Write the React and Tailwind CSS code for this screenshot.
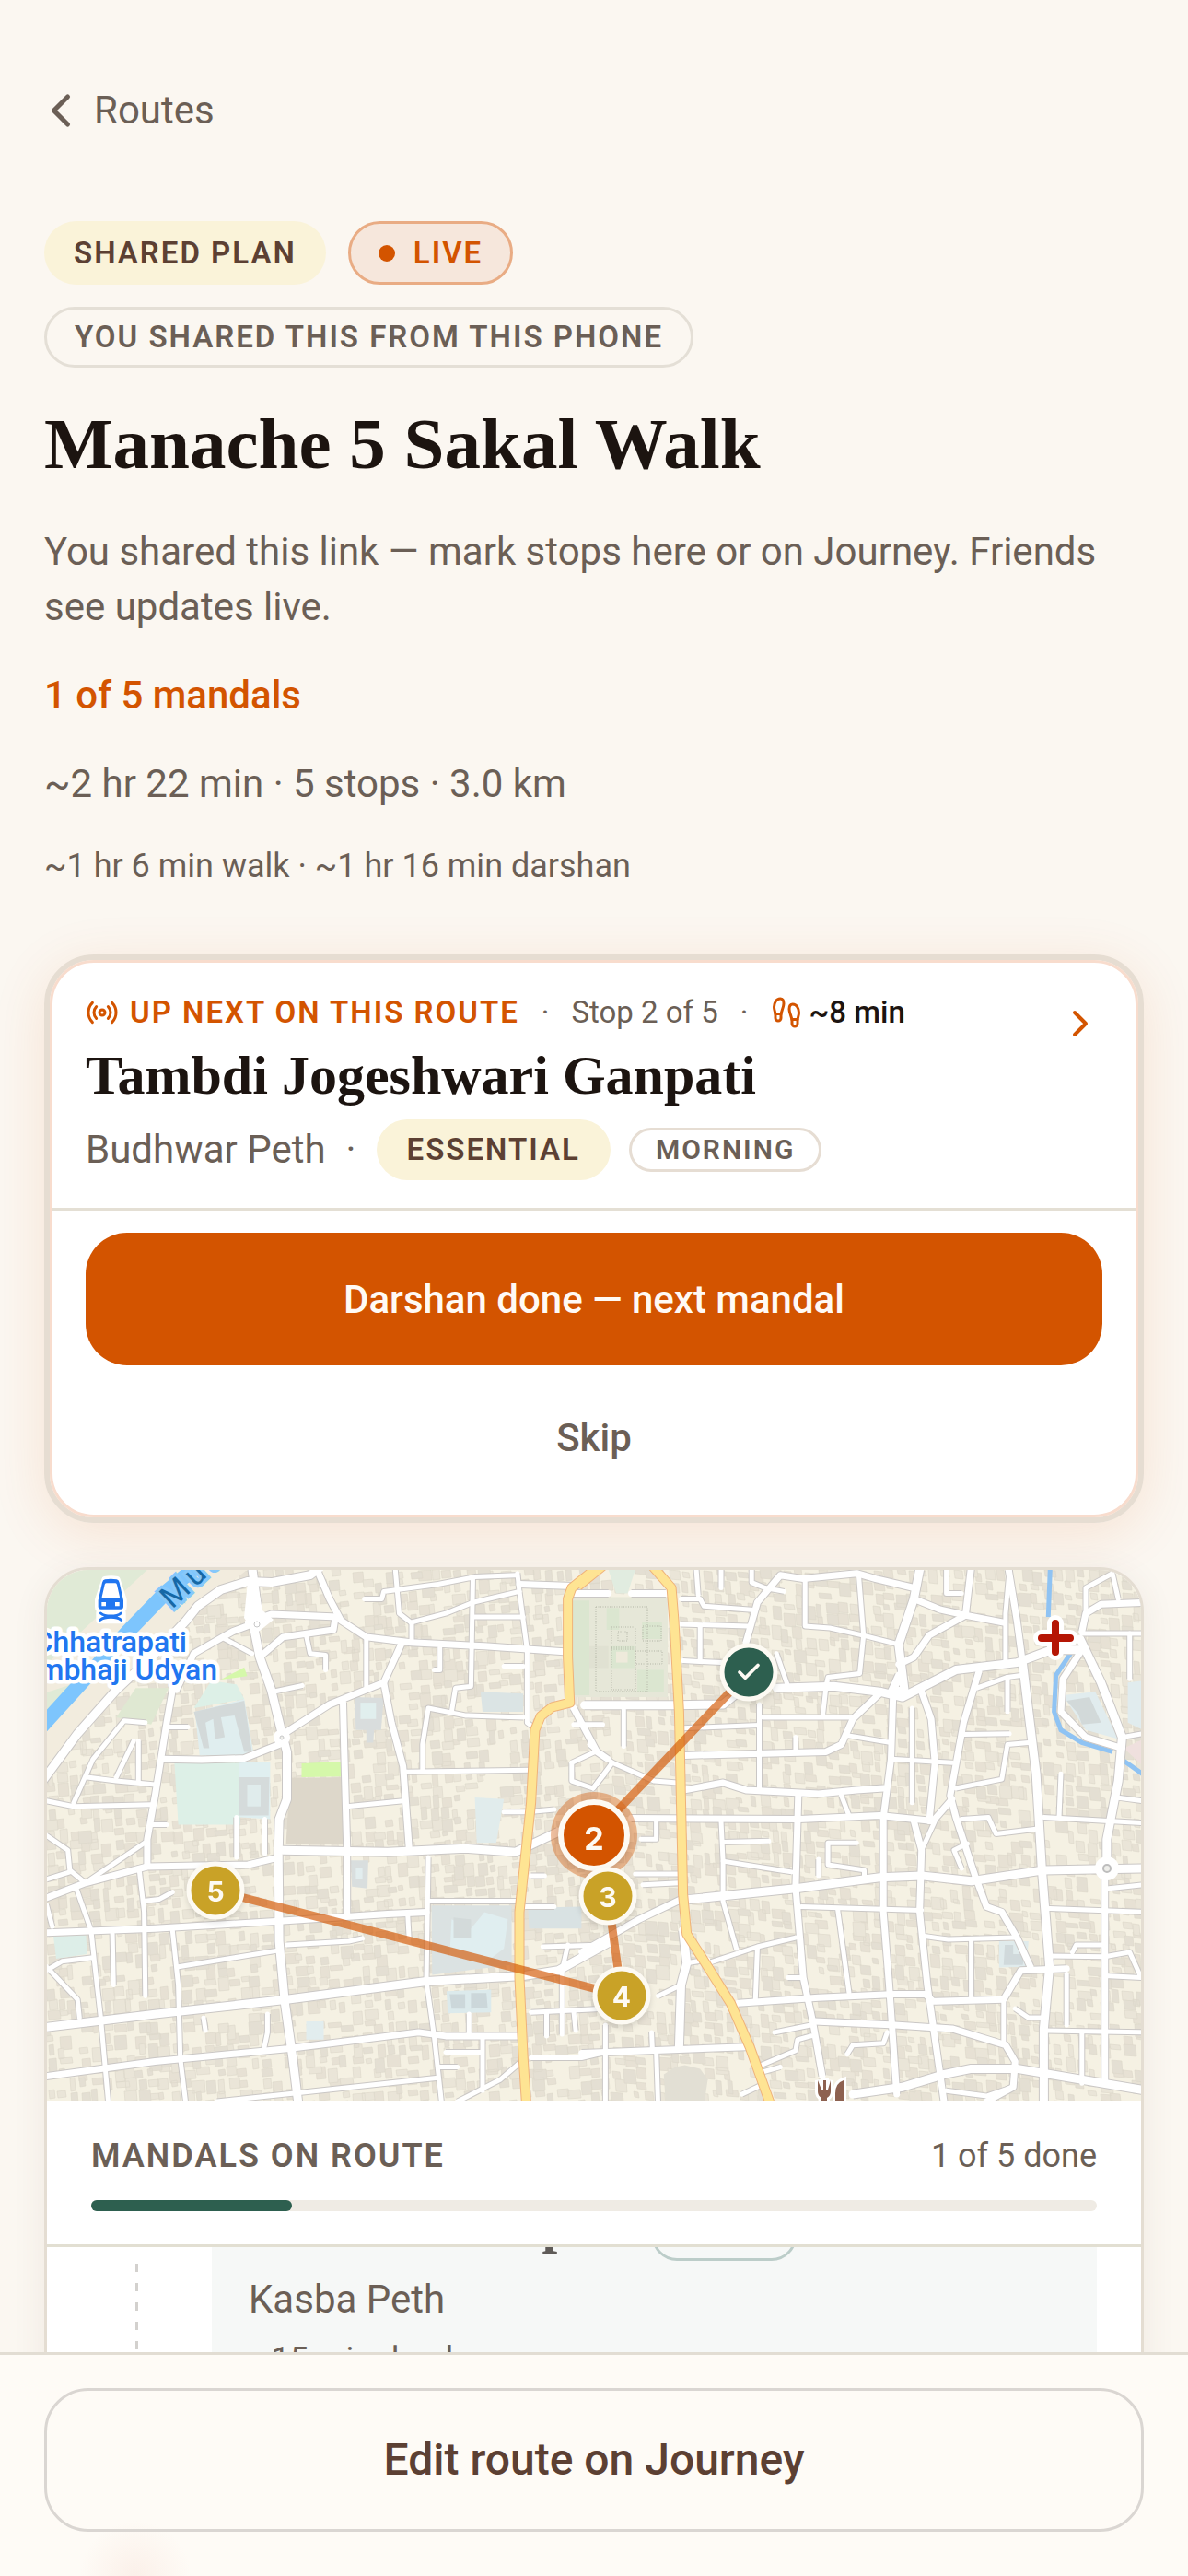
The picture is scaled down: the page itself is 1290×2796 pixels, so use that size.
import { Check, ChevronLeft, ChevronRight, Footprints, Radio } from 'lucide-react';

const PAGE_FONT = "font-['Roboto','Noto_Sans',sans-serif]";
const SERIF_FONT = "font-['Liberation_Serif',serif]";

/**
 * Map geometry
 * The street data is split in two sheets, each with its own origin and scale
 */
const SHEETS = {
  west: { x: -50, y: -24, sx: 2.3758, sy: 2.529 },
  east: { x: 590, y: -24, sx: 2.412, sy: 2.529 },
};

// 'x,y x,y ...' in sheet units -> svg path in map units
const toPath = (sheet, line, close = false) => {
  const s = SHEETS[sheet];
  const points = line.split(' ').map((pair) => {
    const [x, y] = pair.split(',').map(Number);
    return `${Math.round((x / s.sx + s.x) * 10) / 10} ${Math.round((y / s.sy + s.y) * 10) / 10}`;
  });
  return `M${points.join('L')}${close ? 'Z' : ''}`;
};

const ROADS = [
  {
    sheet: 'west',
    width: 9,
    lines: [
      '110,640 200,510 300,390 400,290 480,200 510,160 570,115 640,92 700,95 800,75 825,55',
      '650,50 662,150 655,220 670,300 700,390 725,500 740,560 740,690 720,745 718,840 720,1080 735,1250 755,1400 770,1530',
      '730,830 1000,835 1200,825 1330,835 1400,800 1440,780',
      '110,1317 400,1280 740,1240 1100,1190 1350,1175 1440,1160 1568,1085',
    ],
  },
  {
    sheet: 'west',
    width: 7,
    lines: [
      '640,205 700,182 870,190',
      '455,390 500,290 600,230 650,210',
      '820,65 850,140 880,200 945,245 1060,260 1250,270 1455,285',
      '740,505 850,430 990,370 1035,265',
      '990,370 1010,480 1040,600 1055,820',
      '718,850 640,870 380,875 220,920 110,965',
      '445,390 430,480 415,580 400,680 380,800 380,870',
      '110,1057 400,1045 720,1025 1000,1005 1100,1000',
      '110,1452 400,1410 740,1375 1080,1330 1150,1340 1345,1340',
      '420,580 520,582 630,578 720,540',
      '885,425 888,560 895,820 895,1010',
      '670,300 730,245 860,225 865,190',
      '1340,100 1480,105',
      '1480,440 1540,560 1568,580',
    ],
  },
  {
    sheet: 'west',
    width: 5,
    lines: [
      '580,250 650,290',
      '1020,60 1030,180 1060,205 1150,180 1220,150 1340,120',
      '1062,205 1062,260',
      '945,245 945,380',
      '1040,615 1365,610',
      '1090,610 1090,540 1105,440 1200,460 1350,465',
      '1165,450 1175,385 1215,380 1220,80',
      '1225,190 1350,190',
      '1335,70 1340,120 1360,280 1360,480 1385,500',
      '895,710 1040,695',
      '120,695 190,710 390,705',
      '190,700 240,580 320,475 375,480',
      '225,630 300,640 400,650',
      '300,630 345,530',
      '357,530 357,640',
      '430,492 485,492',
      '120,790 175,830 180,885 220,920 380,805',
      '120,910 180,890',
      '195,930 235,1050 245,1150 260,1290 280,1530',
      '360,890 372,1000 375,1230',
      '445,1050 460,1200 465,1400 480,1530',
      '460,1150 720,1105',
      '740,1090 900,1080 935,1072',
      '560,1520 760,1497 1130,1455',
      '1105,850 1100,1190 1120,1340 1140,1530',
      '1105,970 1335,970',
      '1052,1010 1055,1070',
      '1245,1345 1245,1490',
      '1180,1520 1290,1460 1345,1410',
      '1370,1400 1500,1400 1560,1385',
      '1210,1280 1210,1340',
      '290,1060 293,1200',
      '120,1150 200,1240 205,1290',
      '120,1160 160,1135 240,1125',
      '525,1290 530,1325',
      '690,1280 690,1330 680,1380',
      '610,740 610,850',
      '683,745 683,840',
      '370,970 410,965 445,945',
      '120,980 135,1040',
      '395,760 430,760',
      '1300,725 1360,725 1430,718',
      '1370,900 1405,900',
      '1400,1095 1560,1090',
      '1465,1090 1450,1160 1450,1335',
      '1370,1275 1560,1265',
      '1355,985 1430,985',
      '1410,1280 1410,1340',
      '1480,1270 1485,1325',
      '1475,590 1475,640 1530,660 1560,620',
      '1475,590 1535,560',
      '705,395 780,378',
      '790,240 800,290 840,295 840,335',
      '1300,325 1350,325',
      '1135,275 1135,335 1120,335',
      '940,140 985,140 990,120 1130,100 1225,80 1330,75',
      '1480,485 1555,485',
      '1150,1385 1240,1385',
      '1130,1425 1180,1425',
    ],
  },
  {
    sheet: 'east',
    width: 9,
    lines: [
      '490,385 640,380 760,395 820,410 960,335 1120,315 1210,280 1290,280',
      '1135,320 1150,450 1170,620 1185,880 1205,1150 1190,1320 1190,1530',
      '1285,250 1340,370 1395,520 1385,640 1355,800 1355,880',
      '260,965 540,935 760,905 870,900 1000,915 1190,885 1460,880',
      '865,60 850,140 810,265 825,390 790,400 812,350',
      '-13,432 230,432 350,430 385,400',
      '690,1500 820,1480 930,1445 1000,1430 1120,1430 1460,1490',
      '245,1050 255,1140 240,1200 235,1370',
    ],
  },
  {
    sheet: 'east',
    width: 7,
    lines: [
      '-50,125 50,125',
      '110,125 200,125',
      '410,260 440,150 500,75 560,85 700,70 750,85 850,110',
      '810,320 850,300 890,240 985,185 1000,50',
      '850,140 920,170 985,185 1085,205',
      '1290,230 1300,180 1340,155 1460,150',
      '1290,280 1240,360 1235,450 1300,520 1395,550',
      '795,415 790,580 770,740 770,1000 785,1200 805,1500',
      '870,395 895,470 905,590 890,750',
      '1020,340 980,480 945,680 960,740 1010,900 1040,985 1080,1000 1120,1070 1155,1150',
      '110,742 550,745 760,735 900,750 950,690',
      '250,665 350,645 410,665 600,675 700,665 770,660',
      '547,680 540,930 560,1180 585,1300 610,1450',
      '850,750 870,830 865,1000 885,1200 930,1530',
      '390,1250 600,1235 800,1225 880,1225 900,1245 1085,1240 1130,1160 1250,1155',
      '590,1300 800,1310 950,1320 1090,1365 1115,1410 1110,1480 1040,1520',
      '-20,1110 130,1020 240,965',
      '-20,1387 410,1370',
      '1098,60 1120,200 1135,320',
      '1350,900 1350,1470',
      '250,570 620,560 660,540 690,470 760,400',
    ],
  },
  {
    sheet: 'east',
    width: 5,
    lines: [
      '240,140 290,140 300,160 425,170',
      '240,210 415,215',
      '245,310 345,315',
      '290,215 290,310',
      '425,60 425,95 460,110 510,120',
      '565,85 565,215 630,220 715,240 810,265',
      '705,70 718,240 708,345 625,355 620,380 612,455',
      '935,60 935,125 975,125',
      '1100,60 1090,180 1090,310',
      '490,290 520,380',
      '280,60 285,130',
      '345,60 345,110',
      '1300,180 1300,110 1370,70 1385,140',
      '1290,235 1450,235',
      '1415,235 1415,360',
      '1395,520 1450,510',
      '1380,685 1450,695',
      '1235,620 1230,740',
      '1190,740 1360,750 1450,755',
      '455,465 690,465',
      '245,495 445,487',
      '445,430 445,660',
      '675,515 790,535',
      '540,520 540,560',
      '845,440 845,700',
      '790,580 950,590',
      '980,512 1100,510',
      '1150,535 1095,540 1080,635 960,660',
      '1015,385 1095,355 1130,350',
      '1095,355 1095,450',
      '660,680 680,735',
      '345,750 350,860 350,970 385,1100',
      '350,860 530,890',
      '350,808 470,805',
      '700,810 625,810 625,870 720,885 720,900',
      '600,855 600,900',
      '870,830 905,750',
      '975,745 1045,740 1065,785 1170,772',
      '990,812 955,830 975,880',
      '555,985 870,995',
      '650,990 680,1220',
      '310,1140 440,1095 540,1070',
      '440,1100 435,1240',
      '870,1065 940,1075 1115,1070',
      '1000,1075 1000,1235',
      '1085,1240 1085,1360',
      '485,1330 580,1310',
      '450,1420 540,1380 545,1350 580,1340',
      '675,1390 690,1365 770,1360 780,1330',
      '520,1180 560,1180',
      '1205,990 1450,1000',
      '1205,1120 1350,1122 1415,1110 1445,1180 1350,1175',
      '1265,1110 1275,1090 1350,1090',
      '1250,1170 1250,1310',
      '1195,1325 1450,1330',
      '1290,1330 1290,1470',
      '1115,1265 1150,1290 1190,1290',
      '1360,935 1450,925',
      '180,1230 240,1200',
      '42,1310 42,1530',
      '175,1380 180,1530',
      '163,1330 165,1380',
      '255,1140 310,1130',
      '90,445 90,545',
      '0,540 60,590 170,640 230,645',
      '60,590 10,660',
      '135,800 175,800 175,750',
      '120,895 235,895',
      '140,925 235,920',
      '400,1500 450,1475',
      '450,1440 500,1425',
      '935,1490 1040,1505 1110,1480',
    ],
  },
];

const HIGHWAYS = [
  toPath('west', '1545,50 1475,110 1465,140 1465,300 1470,425 1425,437 1395,462 1380,500 1370,700 1355,850 1340,1000 1340,1180 1350,1400 1358,1530'),
  toPath('east', '-30,105 35,50'),
  toPath('east', '165,50 215,110 222,200 235,450 240,700 245,950 255,1060 310,1150 370,1250 420,1370 475,1530'),
];

const AREAS = [
  ['west', '#f2ecde', '110,50 650,50 480,190 300,390 110,630'],
  ['west', '#e0ead6', '110,50 390,50 270,170 110,330'],
  ['west', '#e0ead6', '110,400 200,370 110,460'],
  ['west', '#dfe8d2', '350,385 435,385 390,485 300,465'],
  ['west', '#ddf0e7', '450,590 620,590 620,760 460,760'],
  ['west', '#e0eff0', '615,588 697,588 697,745 620,740'],
  ['west', '#d5dbdb', '615,630 695,630 693,735 617,735'],
  ['west', '#e0ecec', '638,650 672,650 672,710 638,710'],
  ['west', '#ddf0e7', '500,440 545,365 610,375 630,415'],
  ['west', '#e0eeef', '503,450 630,415 655,570 515,570'],
  ['west', '#d3d9d9', '500,450 630,420 650,560 630,560 605,460 570,465 580,520 555,525 550,470 530,480 540,550 525,550'],
  ['west', '#d5f8aa', '570,362 630,328 638,352'],
  ['west', '#d5f8aa', '778,592 880,587 880,628 778,630'],
  ['west', '#ddd7ca', '748,632 885,630 885,815 738,812'],
  ['west', '#d9dddd', '915,410 990,412 983,500 965,500 963,535 945,535 945,500 918,500'],
  ['west', '#e1efee', '930,425 970,425 970,470 930,470'],
  ['west', '#dbe2e2', '1113,982 1320,982 1320,1145 1115,1172'],
  ['west', '#e0eef0', '1165,1020 1215,1045 1250,1000 1310,1020 1300,1100 1250,1140 1160,1120'],
  ['west', '#d3dada', '1170,1015 1215,1020 1215,1070 1170,1070'],
  ['west', '#ddeee8', '138,1067 222,1063 225,1115 145,1128'],
  ['west', '#e1ecec', '1225,685 1300,690 1280,810 1230,810'],
  ['west', '#dceaec', '1152,1217 1267,1213 1267,1275 1155,1278'],
  ['west', '#ccd7da', '1160,1225 1200,1225 1200,1265 1165,1265'],
  ['west', '#ccd7da', '1215,1222 1255,1222 1258,1262 1215,1265'],
  ['west', '#d9e2e3', '1362,988 1500,985 1500,1045 1365,1045'],
  ['west', '#dbe4e4', '1240,395 1350,400 1350,450 1245,450'],
  ['west', '#e2edee', '790,1300 835,1300 835,1350 790,1350'],
  ['west', '#d9dede', '905,858 950,858 948,935 908,930'],
  ['west', '#e2edee', '918,880 935,880 935,910 918,910'],
  ['east', '#e6e7d8', '-60,135 205,135 205,410 -60,410'],
  ['east', '#dbe6d0', '-45,145 0,145 0,405 -45,405'],
  ['east', '#dbe6d0', '45,165 78,165 78,225 45,225'],
  ['east', '#dbe6d0', '138,205 190,205 190,250 138,250'],
  ['east', '#e0e1d2', '0,270 50,270 50,330 0,330'],
  ['east', '#dbe6d0', '55,270 118,270 118,330 55,330'],
  ['east', '#eeeadb', '70,285 100,285 100,315 70,315'],
  ['east', '#dbe6d0', '125,335 195,335 195,395 125,395'],
  ['east', '#e1ece0', '50,60 120,60 100,125 70,125'],
  ['east', '#e1ecee', '1240,405 1325,395 1385,525 1300,500'],
  ['east', '#d2d9d9', '1250,420 1310,410 1340,480 1290,485 1280,455'],
  ['east', '#e1ecee', '1410,370 1450,365 1450,500 1410,480'],
  ['east', '#efe0de', '1400,550 1450,525 1450,600'],
  ['east', '#e0ebec', '1073,1080 1150,1080 1145,1150 1073,1152'],
  ['east', '#d0d9db', '1088,1090 1110,1090 1110,1115 1140,1115 1135,1145 1085,1145'],
  ['east', '#e2dfd4', '195,1445 225,1425 250,1420 290,1430 310,1460 300,1530 200,1530'],
];

const RIVER = toPath('west', '90,510 330,230 430,120 520,40');
const CREEKS = [
  toPath('east', '1207,50 1202,190'),
  toPath('east', '1270,275 1222,350 1217,450 1235,500 1290,535 1370,560'),
  toPath('east', '1400,585 1450,622'),
];

// Small seeded generator so that the blocks are the same on each render
const seeded = (seed) => () => {
  seed = (seed * 16807) % 2147483647;
  return seed / 2147483647;
};

const buildBlocks = () => {
  const rand = seeded(47);
  const tones = ['', '', ''];
  for (let row = 0; row < 48; row += 1) {
    for (let col = 0; col < 98; col += 1) {
      if (rand() < 0.2) continue;
      const x = Math.round(col * 12.3 + rand() * 5 - 2);
      const y = Math.round(row * 12.3 + rand() * 5 - 2);
      const w = Math.round(5 + rand() * 9);
      const h = Math.round(5 + rand() * 10);
      const tilt = col < 50 ? -1 : 1;
      tones[Math.floor(rand() * 3)] += `M${x} ${y}l${w} ${tilt}l1 ${h}l${-w} ${-tilt}z`;
    }
  }
  return tones;
};

const BLOCKS = buildBlocks();
const BLOCK_TONES = ['#e7e1d4', '#eae5d8', '#e4dfd3'];

const STOPS = [
  { label: '5', x: 184, y: 348 },
  { label: '3', x: 610, y: 354 },
  { label: '4', x: 625, y: 462 },
];

function RouteMap() {
  const roads = ROADS.flatMap(({ sheet, width, lines }) =>
    lines.map((line) => ({ width, d: toPath(sheet, line) }))
  );

  return (
    <svg
      viewBox="0 0 1190 576"
      preserveAspectRatio="xMidYMid slice"
      role="img"
      aria-label="Route map"
      className="block h-[576px] w-full font-['Roboto',sans-serif]"
    >
      <rect width="1190" height="576" fill="#f5f1e3" />
      {BLOCKS.map((d, i) => (
        <path key={BLOCK_TONES[i]} d={d} fill={BLOCK_TONES[i]} stroke="#dcd6c9" strokeWidth="0.6" />
      ))}
      {AREAS.map(([sheet, fill, line]) => (
        <path key={line} d={toPath(sheet, line, true)} fill={fill} />
      ))}
      <path
        d="M597 40h56v92h-56zM614 62h26v24h-26zM621 67h10v10h-10zM614 84h26v46h-26zM648 61h20v16h-20zM640 88h29v14h-29z"
        fill="none"
        stroke="#b3b5a6"
        strokeWidth="1"
        strokeDasharray="1 1.5"
      />

      {/* Water */}
      <path d={RIVER} fill="none" stroke="#7dc5fd" strokeWidth="16" />
      {CREEKS.map((d) => (
        <path key={d} d={d} fill="none" stroke="#8fc3f3" strokeWidth="5" />
      ))}

      {/* Streets: casings first, then the white surface */}
      <g fill="none" stroke="#cac7c5" strokeLinejoin="round">
        {roads.map(({ d, width }) => (
          <path key={d} d={d} strokeWidth={width + 2} />
        ))}
      </g>
      <g fill="none" stroke="#ffffff" strokeLinejoin="round" strokeLinecap="round">
        {roads.map(({ d, width }) => (
          <path key={d} d={d} strokeWidth={width} />
        ))}
      </g>
      <circle cx="1152" cy="324" r="13" fill="#ffffff" />
      <circle cx="1152" cy="324" r="4" fill="#eeeeea" stroke="#bdbdbd" strokeWidth="2" />
      <circle cx="256" cy="182" r="9" fill="#ffffff" />
      <circle cx="256" cy="182" r="2" fill="#eeeeea" stroke="#c8c8c8" />
      <path d="M219 12l10 0l6 32l12 10l-20 16l-12-18z" fill="#ffffff" />
      <circle cx="229" cy="59" r="3" fill="#ffffff" stroke="#c8c8c8" />
      <g fill="none" stroke="#efb27a" strokeWidth="11" strokeLinejoin="round">
        {HIGHWAYS.map((d) => (
          <path key={d} d={d} />
        ))}
      </g>
      <g fill="none" stroke="#fee493" strokeWidth="9" strokeLinejoin="round">
        {HIGHWAYS.map((d) => (
          <path key={d} d={d} />
        ))}
      </g>

      {/* Places */}
      <g fontSize="32" fontWeight="500" fill="#2176f0" stroke="#ffffff" strokeWidth="9" strokeLinejoin="round" paintOrder="stroke" textAnchor="end">
        <text x="153" y="89">Chhatrapati</text>
        <text x="186" y="119">Sambhaji Udyan</text>
      </g>
      <g transform="translate(-10 -14) scale(0.3333)">
        <path d="M222 74q20-5 39 0l21 66v22q0 8-8 8h-66q-8 0-8-8v-22zM204 182h75v24h-75z" fill="#ffffff" stroke="#ffffff" strokeWidth="22" strokeLinejoin="round" />
        <path d="M222 73q19-3 38 0q7 1 9 10l13 58v20q0 9-9 9h-64q-9 0-9-9v-20l13-58q2-9 9-10z" fill="#2176f0" />
        <path d="M226 85h30q4 0 5 5l9 40q1 5-4 5h-50q-5 0-4-5l9-40q1-5 5-5zM211 147h14v13h-14zM255 147h14v13h-14z" fill="#ffffff" />
        <path d="M208 183q10 9 33 9t33-9M206 205q12-9 35-9t34 9" fill="none" stroke="#2176f0" strokeWidth="9" strokeLinecap="round" />
      </g>
      <text
        transform="translate(137 43) rotate(-43)"
        fontSize="34"
        letterSpacing="5"
        fill="#1668a6"
        stroke="#86c8fb"
        strokeWidth="7"
        paintOrder="stroke"
      >
        Mutha
      </text>
      <path d="M1096 58v31M1081 74h31" stroke="#ffffff" strokeWidth="18" strokeLinecap="round" />
      <path d="M1096 58v31M1081 74h31" stroke="#b51605" strokeWidth="8" strokeLinecap="round" />
      <g fill="#8d6150" stroke="#ffffff" strokeWidth="6" paintOrder="stroke">
        <path d="M838 554v12q0 5 4 7v3h6v-3q4-2 4-7v-12l-3 10h-2v-10h-3v10h-2z" />
        <path d="M866 554q-9 3-9 14v8h9z" />
      </g>

      {/* Walking route */}
      <path
        d="M763 111L595 288L610 354L625 462L184 348"
        fill="none"
        stroke="#d35400"
        strokeOpacity="0.65"
        strokeWidth="9"
        strokeLinejoin="round"
      />
      <g className="drop-shadow-md">
        <circle cx="763" cy="111" r="29" fill="#2d5f4f" stroke="#fdfaf3" strokeWidth="5" />
        <Check x="748" y="96" width="30" height="30" color="#fdfaf3" strokeWidth={3} />
      </g>
      <circle cx="595" cy="288" r="47" fill="#d35400" fillOpacity="0.38" />
      <g className="drop-shadow-md" fontSize="34" fontWeight="700" textAnchor="middle">
        <circle cx="595" cy="288" r="36" fill="#d35400" stroke="#fdfaf3" strokeWidth="6" />
        <text x="595" y="304" fill="#fdfaf3" className="font-['Inter',sans-serif]">2</text>
      </g>
      {STOPS.map(({ label, x, y }) => (
        <g key={label} className="drop-shadow-md" fontSize="30" fontWeight="700" textAnchor="middle">
          <circle cx={x} cy={y} r="29" fill="#c9a227" stroke="#fdfaf3" strokeWidth="5" />
          <text x={x} y={y + 12} fill="#fdfaf3" className="font-['Inter',sans-serif]">{label}</text>
        </g>
      ))}
    </svg>
  );
}

/**
 * Card with the next stop and its two actions
 */
function UpNextCard() {
  return (
    <section className="mt-[69px] rounded-[54px] border-[6px] border-[#e6ddd2] shadow-[0_12px_60px_rgba(211,84,0,0.12)]">
      <div className="overflow-hidden rounded-[48px] border-[3px] border-[#f8dccd] bg-white">
        <a href="#stop-2" className="flex items-start justify-between border-b-[3px] border-[#e4dfd4] px-9 pt-[30px] pb-[30px]">
          <div>
            <div className="flex items-center gap-6 text-[33px] leading-[48px] text-[#6b5f56]">
              <span className="flex items-center gap-3 font-semibold tracking-[2px] text-[#d35400]">
                <Radio size={36} strokeWidth={2} />
                UP NEXT ON THIS ROUTE
              </span>
              <span>·</span>
              <span>Stop 2 of 5</span>
              <span>·</span>
              <span className="flex items-center gap-1.5 font-medium text-[#1c1410]">
                <Footprints size={36} strokeWidth={2} className="text-[#d35400]" />
                ~8 min
              </span>
            </div>
            <h2 className={`mt-2 text-[60px] leading-[72px] font-bold text-[#1c1410] ${SERIF_FONT}`}>
              Tambdi Jogeshwari Ganpati
            </h2>
            <div className="mt-3 flex items-center text-[42px] leading-[60px] text-[#6b5f56]">
              <span>Budhwar Peth</span>
              <span className="mx-[22px]">·</span>
              <span className="rounded-full bg-[#faf3d9] px-[33px] py-[9px] text-[33px] leading-[48px] font-semibold tracking-[2px] text-[#5c4033]">
                ESSENTIAL
              </span>
              <span className="ml-5 rounded-full border-[3px] border-[#e6ddd3] px-[26px] text-[30px] leading-[42px] font-semibold tracking-[2px]">
                MORNING
              </span>
            </div>
          </div>
          <ChevronRight size={48} strokeWidth={2} className="mt-3 text-[#d35400]" />
        </a>
        <div className="flex flex-col gap-1.5 px-9 pt-6 pb-3 text-[42px] font-medium">
          <button type="button" className="h-36 rounded-[45px] bg-[#d35400] text-[#fffaf5]">
            Darshan done — next mandal
          </button>
          <button type="button" className="h-36 rounded-[45px] text-[#6b5f56]">
            Skip
          </button>
        </div>
      </div>
    </section>
  );
}

function RouteCard() {
  return (
    <section className="mt-12 overflow-hidden rounded-[48px] border-[3px] border-[#e4ddd2] bg-white shadow-[0_6px_36px_rgba(92,64,51,0.08)]">
      <RouteMap />
      <div className="border-b-[3px] border-[#e2dfd2] px-12 pt-[33px] pb-9 text-[36px] leading-[54px] text-[#6b5f56]">
        <div className="flex items-center justify-between">
          <h3 className="font-semibold tracking-[2px]">MANDALS ON ROUTE</h3>
          <span>1 of 5 done</span>
        </div>
        <div className="mt-[21px] h-3 rounded-full bg-[#efebe4]">
          <div className="h-full w-1/5 rounded-full bg-[#2d5f4f]" />
        </div>
      </div>

      {/* Stop list, scrolled part way down */}
      <div className="flex h-[900px] gap-20 overflow-hidden px-12">
        <div className="mt-[18px] ml-12 w-[3px] bg-[repeating-linear-gradient(to_bottom,#d3d1ce_0_9px,transparent_9px_21px)]" />
        <div className="flex-1 bg-[#f6f8f7] px-10 text-[#6b5f56]">
          <div className="-mt-[62px] flex items-start gap-5">
            <h4 className={`text-[60px] leading-[72px] font-bold text-[#5f5b58] ${SERIF_FONT}`}>Kasba Ganapati</h4>
            <span className="mt-[23px] rounded-full border-[3px] border-[#bccdc9] px-8 text-[30px] leading-[48px] font-semibold tracking-[2px]">
              DONE
            </span>
          </div>
          <p className="mt-3 text-[42px] leading-[60px]">Kasba Peth</p>
          <p className="mt-2 text-[36px] leading-[54px]">~15 min darshan</p>
        </div>
      </div>
    </section>
  );
}

const App = () => {
  return (
    <div className={`flex h-screen flex-col bg-[#fbf7f1] ${PAGE_FONT}`}>
      <main className="min-h-0 flex-1 overflow-y-auto px-12 [scrollbar-width:none]">
        <nav className="flex pt-[90px]">
          <a href="#routes" className="-ml-3 flex items-center gap-1.5 text-[42px] leading-[60px] text-[#6b5f56]">
            <ChevronLeft size={60} strokeWidth={2} />
            Routes
          </a>
        </nav>

        {/* Plan header */}
        <header className="mt-[90px] text-[#6b5f56]">
          <div className="flex flex-wrap gap-6 text-[33px] font-semibold tracking-[2px]">
            <span className="rounded-full bg-[#faf3d9] px-8 leading-[69px] text-[#5c4033]">SHARED PLAN</span>
            <span className="flex items-center gap-5 rounded-full border-[3px] border-[#e9ac84] bg-[#f6e7dc] px-[30px] leading-[63px] text-[#d35400]">
              <span className="size-[18px] rounded-full bg-[#d35400]" />
              LIVE
            </span>
            <span className="basis-full">
              <span className="inline-block rounded-full border-[3px] border-[#e4dfd6] px-[30px] leading-[60px]">
                YOU SHARED THIS FROM THIS PHONE
              </span>
            </span>
          </div>
          <h1 className={`mt-10 text-[79px] leading-[86px] font-bold text-[#1c1410] ${SERIF_FONT}`}>
            Manache 5 Sakal Walk
          </h1>
          <p className="mt-11 text-[42px] leading-[60px]">
            You shared this link — mark stops here or on Journey. Friends see updates live.
          </p>
          <p className="mt-9 text-[42px] leading-[60px] font-medium text-[#d35400]">1 of 5 mandals</p>
          <p className="mt-9 text-[42px] leading-[60px]">~2 hr 22 min · 5 stops · 3.0 km</p>
          <p className="mt-8 text-[36px] leading-[54px]">~1 hr 6 min walk · ~1 hr 16 min darshan</p>
        </header>

        <UpNextCard />
        <RouteCard />
      </main>

      <footer className="border-t-[3px] border-[#e2ddd3] bg-[#fefbf6] bg-[radial-gradient(circle_at_147px_240px,#fbf0e9_0,transparent_60px)] px-12 pt-9 pb-12">
        <button
          type="button"
          className="h-[156px] w-full rounded-[48px] border-[3px] border-[#dad6d2] text-[48px] font-medium text-[#5c4033]"
        >
          Edit route on Journey
        </button>
      </footer>
    </div>
  );
};

export default App;
